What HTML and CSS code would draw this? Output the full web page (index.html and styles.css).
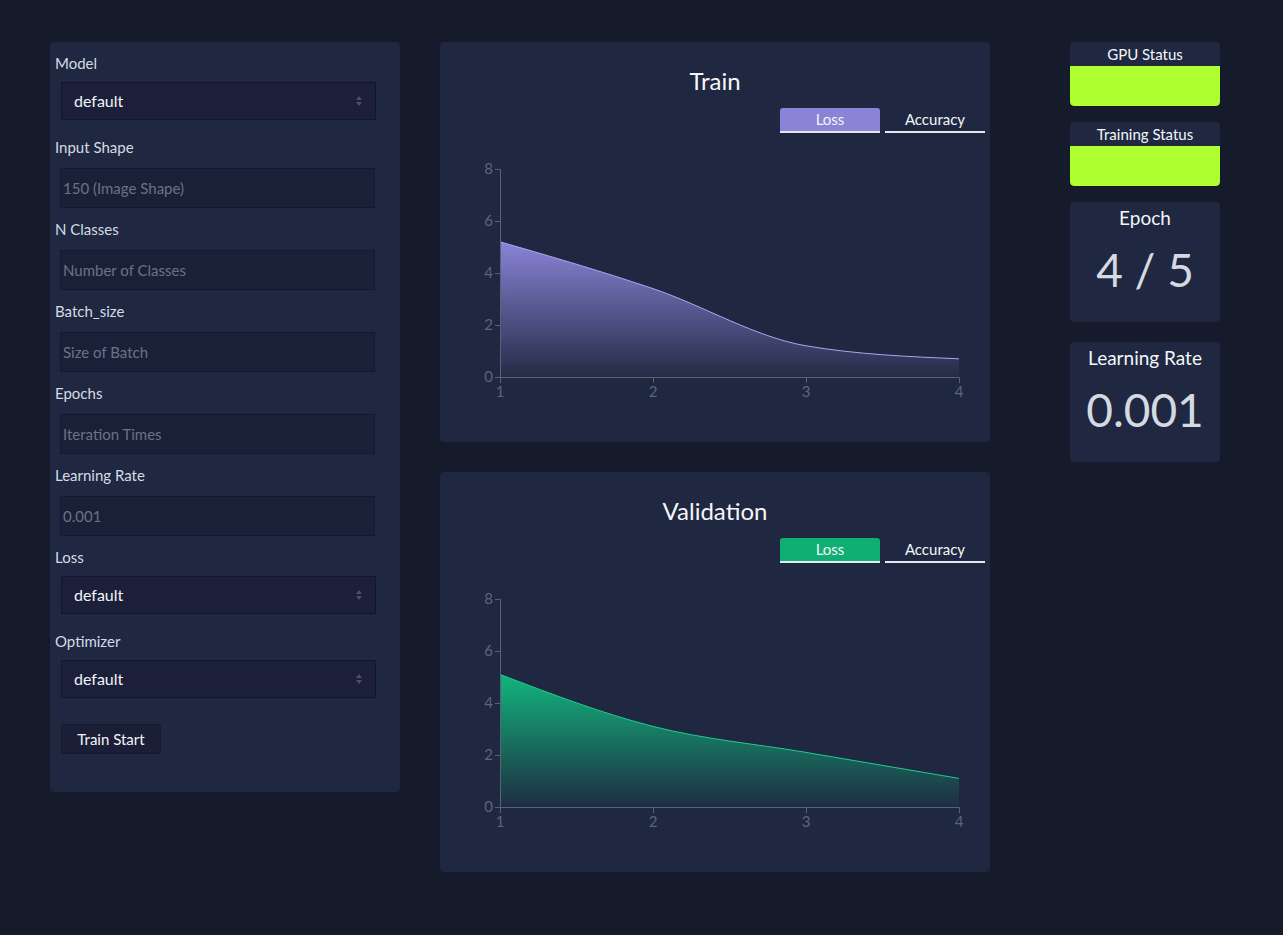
FILE: index.html
```html
<!DOCTYPE html>
<html>
<head>
<meta charset="utf-8">
<title>Training Dashboard</title>
<link rel="stylesheet" href="styles.css">
</head>
<body>
<div class="layout">
  <form class="config">
    <label class="lbl">Model</label>
    <div class="select-wrap">
      <select class="sel"><option>default</option></select>
    </div>
    <label class="lbl">Input Shape</label>
    <input class="inp" placeholder="150 (Image Shape)">
    <label class="lbl">N Classes</label>
    <input class="inp" placeholder="Number of Classes">
    <label class="lbl">Batch_size</label>
    <input class="inp" placeholder="Size of Batch">
    <label class="lbl">Epochs</label>
    <input class="inp" placeholder="Iteration Times">
    <label class="lbl">Learning Rate</label>
    <input class="inp" placeholder="0.001">
    <label class="lbl">Loss</label>
    <div class="select-wrap">
      <select class="sel"><option>default</option></select>
    </div>
    <label class="lbl">Optimizer</label>
    <div class="select-wrap">
      <select class="sel"><option>default</option></select>
    </div>
    <button type="button" class="btn">Train Start</button>
  </form>

  <div class="charts">
    <section class="chart-card">
      <h2 class="chart-title">Train</h2>
      <div class="tabs">
        <span class="tab active-purple">Loss</span>
        <span class="tab">Accuracy</span>
      </div>
      <svg class="plot" width="550" height="300" viewBox="0 0 550 300">
        <defs>
          <linearGradient id="gp" x1="0" y1="108" x2="0" y2="244" gradientUnits="userSpaceOnUse">
            <stop offset="0" stop-color="#8a84d8" stop-opacity="1"/>
            <stop offset="1" stop-color="#8a84d8" stop-opacity="0.04"/>
          </linearGradient>
        </defs>
        <path d="M60,108.8 C111,123.5 162,138.3 213,155.6 C264,172.9 315,204.1 366,212.8 C417,221.5 468,223.6 519,225.8 L519,244 L60,244 Z" fill="url(#gp)"/>
        <path d="M60,108.8 C111,123.5 162,138.3 213,155.6 C264,172.9 315,204.1 366,212.8 C417,221.5 468,223.6 519,225.8" fill="none" stroke="#aaa5f2" stroke-width="1"/>
        <g class="axis">
          <path d="M55,36.5 H60.5 V244.5 H519.5 V250"/>
          <path d="M55,88.5 H60 M55,140.5 H60 M55,192.5 H60 M55,244.5 H60"/>
          <path d="M60.5,244 V250 M213.5,244 V250 M366.5,244 V250"/>
        </g>
        <g class="ticks-y">
          <text x="53" y="41">8</text>
          <text x="53" y="93">6</text>
          <text x="53" y="145">4</text>
          <text x="53" y="197">2</text>
          <text x="53" y="249">0</text>
        </g>
        <g class="ticks-x">
          <text x="60" y="264">1</text>
          <text x="213" y="264">2</text>
          <text x="366" y="264">3</text>
          <text x="519" y="264">4</text>
        </g>
      </svg>
    </section>

    <section class="chart-card">
      <h2 class="chart-title">Validation</h2>
      <div class="tabs">
        <span class="tab active-green">Loss</span>
        <span class="tab">Accuracy</span>
      </div>
      <svg class="plot" width="550" height="300" viewBox="0 0 550 300">
        <defs>
          <linearGradient id="gg" x1="0" y1="111" x2="0" y2="244" gradientUnits="userSpaceOnUse">
            <stop offset="0" stop-color="#12b57c" stop-opacity="1"/>
            <stop offset="1" stop-color="#12b57c" stop-opacity="0.04"/>
          </linearGradient>
        </defs>
        <path d="M60,111.4 C111,130.9 162,150.4 213,163.4 C264,176.4 315,180.7 366,189.4 C417,198.1 468,206.7 519,215.4 L519,244 L60,244 Z" fill="url(#gg)"/>
        <path d="M60,111.4 C111,130.9 162,150.4 213,163.4 C264,176.4 315,180.7 366,189.4 C417,198.1 468,206.7 519,215.4" fill="none" stroke="#1ccf90" stroke-width="1"/>
        <g class="axis">
          <path d="M55,36.5 H60.5 V244.5 H519.5 V250"/>
          <path d="M55,88.5 H60 M55,140.5 H60 M55,192.5 H60 M55,244.5 H60"/>
          <path d="M60.5,244 V250 M213.5,244 V250 M366.5,244 V250"/>
        </g>
        <g class="ticks-y">
          <text x="53" y="41">8</text>
          <text x="53" y="93">6</text>
          <text x="53" y="145">4</text>
          <text x="53" y="197">2</text>
          <text x="53" y="249">0</text>
        </g>
        <g class="ticks-x">
          <text x="60" y="264">1</text>
          <text x="213" y="264">2</text>
          <text x="366" y="264">3</text>
          <text x="519" y="264">4</text>
        </g>
      </svg>
    </section>
  </div>

  <aside class="status">
    <div class="status-card">
      <div class="status-head">GPU Status</div>
      <div class="status-light"></div>
    </div>
    <div class="status-card">
      <div class="status-head">Training Status</div>
      <div class="status-light"></div>
    </div>
    <div class="stat-card">
      <div class="stat-title">Epoch</div>
      <div class="stat-value">4 / 5</div>
    </div>
    <div class="stat-card lr">
      <div class="stat-title">Learning Rate</div>
      <div class="stat-value">0.001</div>
    </div>
  </aside>
</div>
</body>
</html>
```

FILE: styles.css
```css
* { box-sizing: border-box; }

html, body {
  margin: 0;
  padding: 0;
  background: #161b2b;
  color: #e8ebf0;
  font-family: Lato, "Noto Sans", "Liberation Sans", sans-serif;
}

.layout {
  display: flex;
  align-items: flex-start;
  padding: 42px 0 0 50px;
}

/* ---------- left config panel ---------- */
.config {
  width: 350px;
  background: #1f2840;
  border-radius: 4px;
  padding: 11px 24px 38px 5px;
  display: flex;
  flex-direction: column;
  margin: 0;
}

.lbl {
  display: block;
  font-size: 15px;
  line-height: 20px;
  height: 20px;
  color: #d5dbe5;
}

.select-wrap {
  position: relative;
  width: 315px;
  margin: 9px 0 17px 6px;
}
.select-wrap::before,
.select-wrap::after {
  content: "";
  position: absolute;
  right: 14px;
  width: 0;
  height: 0;
  border-left: 3px solid transparent;
  border-right: 3px solid transparent;
  pointer-events: none;
}
.select-wrap::before {
  top: 14px;
  border-bottom: 4px solid #4a5068;
}
.select-wrap::after {
  top: 20px;
  border-top: 4px solid #4a5068;
}

.sel {
  appearance: none;
  -webkit-appearance: none;
  display: block;
  width: 315px;
  height: 38px;
  background: #1b1f39;
  border: 1px solid #12162a;
  border-radius: 1px;
  color: #f2f4f8;
  font-family: inherit;
  font-size: 16px;
  padding: 0 0 2px 12px;
  outline: none;
}

.inp {
  display: block;
  width: 315px;
  height: 40px;
  margin: 11px 0 11px 5px;
  background: #1b2039;
  border: 1px solid #141931;
  border-radius: 1px;
  color: #f2f4f8;
  font-family: inherit;
  font-size: 15px;
  padding: 0 0 0 2px;
  outline: none;
}
.inp::placeholder { color: #6b7286; }

.btn {
  align-self: flex-start;
  margin: 9px 0 0 6px;
  width: 100px;
  height: 30px;
  background: #1a1f37;
  border: 1px solid #151a2c;
  border-radius: 3px;
  color: #f2f4f8;
  font-family: inherit;
  font-size: 15px;
  padding: 0;
}

/* ---------- charts ---------- */
.charts {
  display: flex;
  flex-direction: column;
  gap: 30px;
  margin-left: 40px;
  width: 550px;
}

.chart-card {
  height: 400px;
  background: #1f2840;
  border-radius: 4px;
  padding-top: 24px;
}

.chart-title {
  margin: 0;
  text-align: center;
  font-size: 24px;
  line-height: 30px;
  font-weight: 400;
  color: #f4f6fa;
}

.tabs {
  display: flex;
  justify-content: flex-end;
  gap: 5px;
  padding-right: 5px;
  margin-top: 12px;
}

.tab {
  width: 100px;
  height: 25px;
  text-align: center;
  font-size: 15px;
  line-height: 23px;
  color: #f4f6fa;
  border-bottom: 2px solid #e6e8f0;
  border-radius: 3px 3px 0 0;
}
.active-purple { background: #8a84d6; }
.active-green { background: #0fae73; }

.plot { display: block; }

.axis path {
  fill: none;
  stroke: #5b6275;
  stroke-width: 1;
}
.ticks-y text, .ticks-x text {
  fill: #5e6578;
  font-family: Lato, "Noto Sans", sans-serif;
  font-size: 15px;
}
.ticks-y text { text-anchor: end; }
.ticks-x text { text-anchor: middle; }

/* ---------- status column ---------- */
.status {
  margin-left: 80px;
  width: 150px;
  display: flex;
  flex-direction: column;
}

.status-card {
  height: 64px;
  border-radius: 4px;
  overflow: hidden;
  background: #1f2840;
  margin-bottom: 16px;
}
.status-head {
  height: 24px;
  text-align: center;
  font-size: 15px;
  line-height: 24px;
  color: #f4f6fa;
}
.status-light {
  height: 40px;
  background: #adff2f;
  border-radius: 0 0 4px 4px;
}

.stat-card {
  height: 120px;
  background: #1f2840;
  border-radius: 4px;
  text-align: center;
  padding-top: 4px;
}
.stat-card.lr { margin-top: 20px; }

.stat-title {
  font-size: 19px;
  line-height: 24px;
  color: #f4f6fa;
}
.stat-value {
  margin-top: 10px;
  font-size: 46px;
  line-height: 60px;
  color: #d5d9e1;
}
```
